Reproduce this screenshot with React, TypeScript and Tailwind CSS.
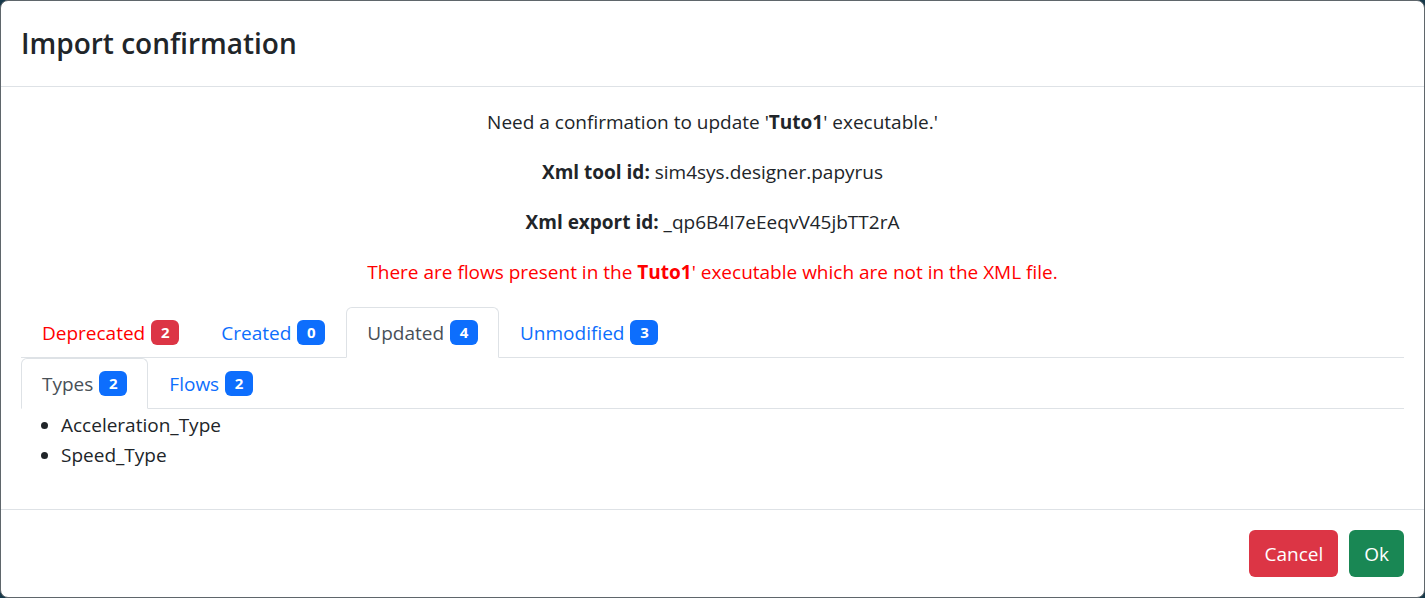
import React from "react"

type Tab = { label: string; count: number; tone: "danger" | "link" | "active" }

const mainTabs: Tab[] = [
  { label: "Deprecated", count: 2, tone: "danger" },
  { label: "Created", count: 0, tone: "link" },
  { label: "Updated", count: 4, tone: "active" },
  { label: "Unmodified", count: 3, tone: "link" },
]

const subTabs: Tab[] = [
  { label: "Types", count: 2, tone: "active" },
  { label: "Flows", count: 2, tone: "link" },
]

function Badge({ count, red }: { count: number; red?: boolean }) {
  return (
    <span
      className={`ml-[6px] inline-flex h-[25px] w-[28px] items-center justify-center rounded-[6px] text-[15px] font-bold leading-none text-white ${
        red ? "bg-[#dc3545]" : "bg-[#0d6efd]"
      }`}
    >
      {count}
    </span>
  )
}

function TabBar({ tabs }: { tabs: Tab[] }) {
  return (
    <div className="flex border-b border-[#dee2e6]">
      {tabs.map((t) => (
        <div
          key={t.label}
          className={`-mb-px flex h-[51px] items-center rounded-t-[6px] border px-[20px] ${
            t.tone === "active"
              ? "border-[#dee2e6] border-b-white bg-white text-[#495057]"
              : t.tone === "danger"
                ? "border-transparent text-[#ff0000]"
                : "border-transparent text-[#0d6efd]"
          }`}
        >
          <span>{t.label}</span>
          <Badge count={t.count} red={t.tone === "danger"} />
        </div>
      ))}
    </div>
  )
}

export default function App() {
  return (
    <div
      className="h-[598px] w-[1425px] bg-[#17394a] text-[19px] leading-[30px] text-[#212529]"
      style={{ fontFamily: '"Segoe UI", "Open Sans", "Noto Sans", sans-serif' }}
    >
      <div className="flex h-full flex-col overflow-hidden rounded-[8px] border border-[#5f666b] bg-white">
        {/* header */}
        <div className="flex h-[86px] shrink-0 items-center border-b border-[#dee2e6] px-[20px]">
          <h4 className="text-[28px] font-semibold leading-[45px]">Import confirmation</h4>
        </div>

        {/* body */}
        <div className="flex-1 p-[20px]">
          <div className="flex flex-col gap-[20px] text-center">
            <p>
              Need a confirmation to update '<b>Tuto1</b>' executable.'
            </p>
            <p>
              <b>Xml tool id:</b> sim4sys.designer.papyrus
            </p>
            <p>
              <b>Xml export id:</b> _qp6B4I7eEeqvV45jbTT2rA
            </p>
            <p className="text-[#ff0000]">
              There are flows present in the <b>Tuto1</b>' executable which are not in the XML file.
            </p>
          </div>

          <div className="mt-[20px]">
            <TabBar tabs={mainTabs} />
            <TabBar tabs={subTabs} />
            <ul className="list-disc pl-[40px] pt-px">
              <li>Acceleration_Type</li>
              <li>Speed_Type</li>
            </ul>
          </div>
        </div>

        {/* footer */}
        <div className="flex shrink-0 justify-end gap-[11px] border-t border-[#dee2e6] p-[20px]">
          <button className="h-[47px] rounded-[6px] bg-[#dc3545] px-[15px] text-[19px] text-white">Cancel</button>
          <button className="h-[47px] rounded-[6px] bg-[#198754] px-[15px] text-[19px] text-white">Ok</button>
        </div>
      </div>
    </div>
  )
}
